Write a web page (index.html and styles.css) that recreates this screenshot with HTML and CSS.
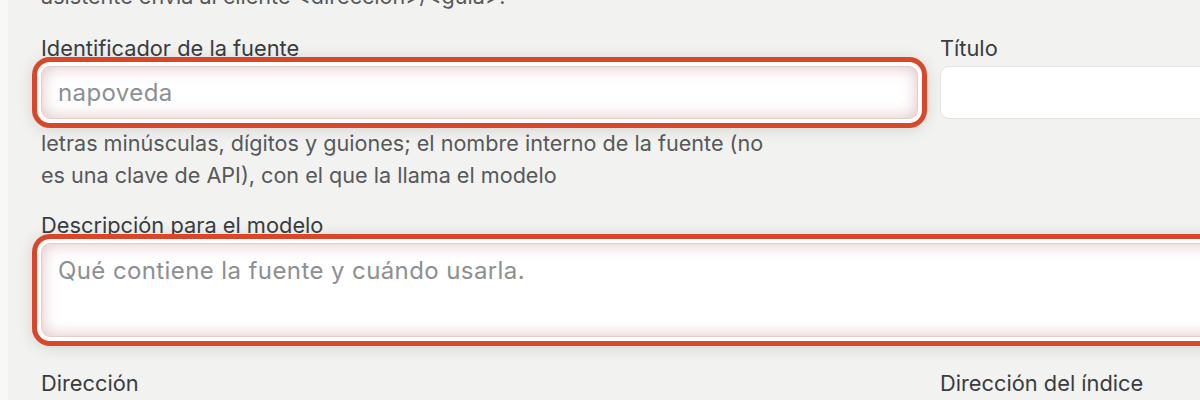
FILE: index.html
```html
<!DOCTYPE html>
<html lang="es">
<head>
<meta charset="utf-8">
<title>Fuente</title>
<link rel="stylesheet" href="styles.css">
</head>
<body>
<div class="panel">
  <p class="hint top-hint">asistente envía al cliente &lt;dirección&gt;/&lt;guía&gt;.</p>
  <div class="grid">
    <div class="field">
      <label class="label">Identificador de la fuente</label>
      <input class="input focus" type="text" placeholder="napoveda">
      <p class="hint narrow">letras minúsculas, dígitos y guiones; el nombre interno de la fuente (no es una clave de API), con el que la llama el modelo</p>
    </div>
    <div class="field">
      <label class="label">Título</label>
      <input class="input" type="text">
    </div>
    <div class="field wide">
      <label class="label">Descripción para el modelo</label>
      <textarea class="input area focus" placeholder="Qué contiene la fuente y cuándo usarla."></textarea>
    </div>
    <div class="field">
      <label class="label">Dirección</label>
      <input class="input" type="text">
    </div>
    <div class="field">
      <label class="label">Dirección del índice</label>
      <input class="input" type="text">
    </div>
  </div>
</div>
</body>
</html>
```
FILE: styles.css
```css
html, body {
  margin: 0;
  padding: 0;
  overflow: hidden;
  height: 400px;
  background: #f8f8f7;
}
body {
  font-family: Inter, "Noto Sans", "Liberation Sans", sans-serif;
}
.panel {
  margin-left: 8px;
  margin-top: -20px;
  width: 1300px;
  background: #f2f2f0;
  padding-left: 33px;
  box-sizing: border-box;
  min-height: 440px;
}
.hint {
  margin: 0;
  font-size: 21.6px;
  line-height: 32px;
  color: #56585a;
}
.top-hint {
  margin-bottom: 24px;
}
.narrow {
  max-width: 735px;
  margin-top: 8px;
}
.grid {
  display: grid;
  grid-template-columns: 877px 320px;
  column-gap: 22px;
  row-gap: 22px;
}
.wide {
  grid-column: 1 / span 2;
  width: 1250px;
  margin-bottom: 12px;
}
.field {
  display: flex;
  flex-direction: column;
}
.label {
  font-size: 21.8px;
  line-height: 24px;
  color: #3a3c3f;
  margin-bottom: 6px;
}
.input {
  box-sizing: border-box;
  height: 53px;
  border: 1px solid #e3e3e1;
  border-radius: 9px;
  background: #fff;
  font-family: inherit;
  font-size: 24px;
  padding: 0 16px;
  color: #333;
  outline: none;
}
.input::placeholder {
  color: #8d8f92;
  letter-spacing: 0.4px;
}
.focus {
  border-color: #e3cccc;
  box-shadow:
    inset 0 0 16px rgba(170, 90, 90, 0.38),
    0 0 0 4px #ffffff,
    0 0 0 9px #d9472a,
    0 2px 16px 9px rgba(0, 0, 0, 0.12);
}
.area {
  height: 94px;
  resize: none;
  padding-top: 12px;
  line-height: 30px;
}
```
